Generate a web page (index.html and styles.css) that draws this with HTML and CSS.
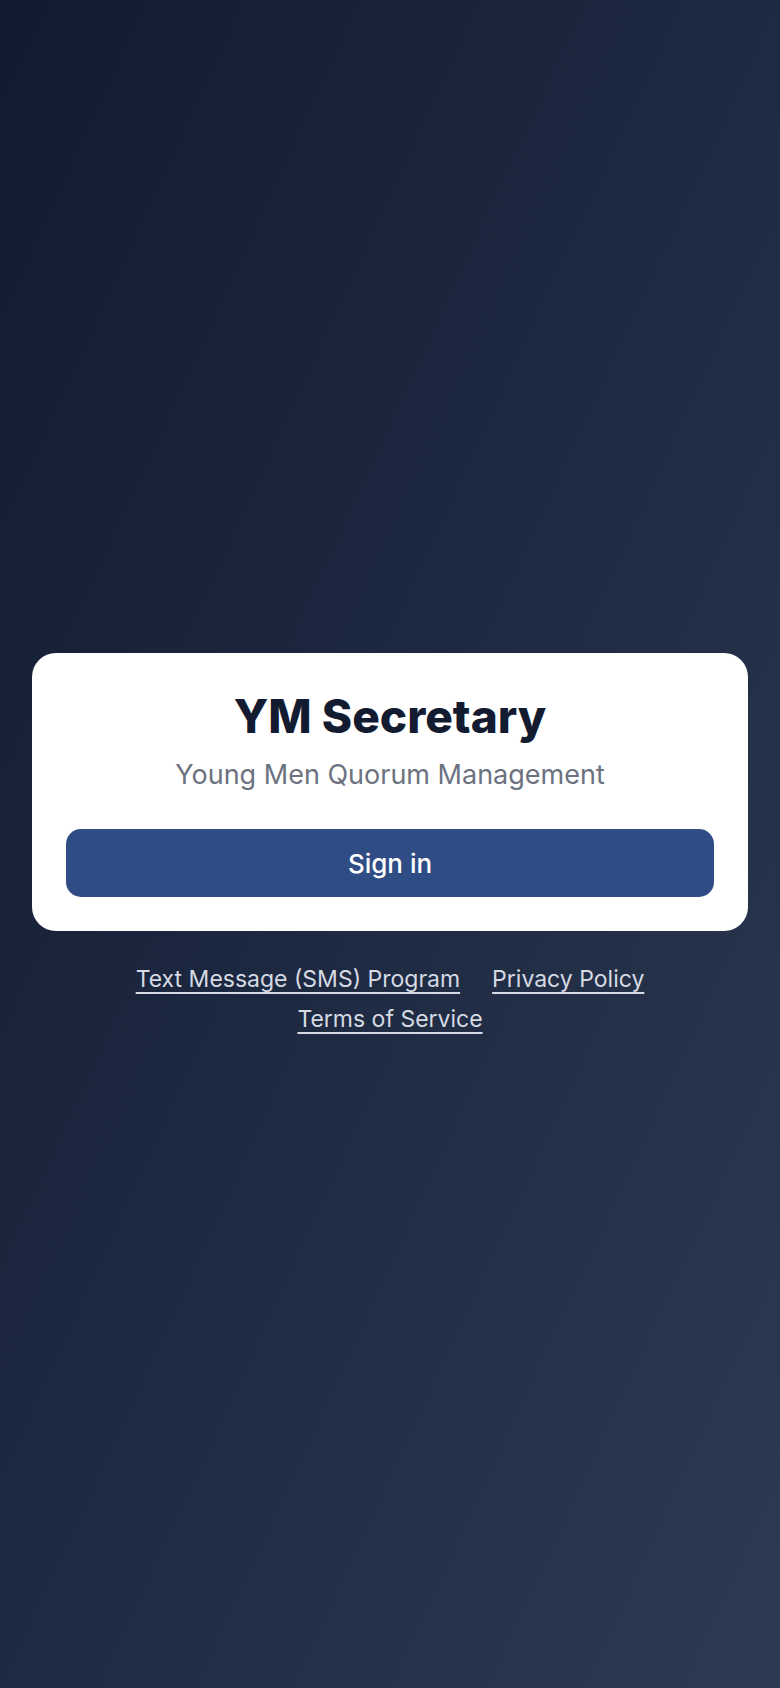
FILE: index.html
```html
<!DOCTYPE html>
<html lang="en">
<head>
    <meta charset="UTF-8">
    <meta name="viewport" content="width=device-width, initial-scale=1.0">
    <title>YM Secretary</title>
    <link rel="stylesheet" href="styles.css">
</head>
<body>
    <main class="login">
        <div class="login-card">
            <h1>YM Secretary</h1>
            <p class="tagline">Young Men Quorum Management</p>
            <button class="signin-btn" type="button">Sign in</button>
        </div>
        <nav class="legal-links">
            <a href="#">Text Message (SMS) Program</a>
            <a href="#">Privacy Policy</a>
            <a href="#">Terms of Service</a>
        </nav>
    </main>
</body>
</html>
```

FILE: styles.css
```css
* {
    box-sizing: border-box;
}

body {
    font-family: Inter, "Noto Sans", Arial, sans-serif;
    margin: 0;
    padding: 0;
    min-height: 100vh;
    background: linear-gradient(to bottom right, #111a30 0%, #1e2a42 50%, #2c3a52 100%);
    display: flex;
    align-items: center;
    justify-content: center;
}

.login {
    width: 100%;
    padding: 0 32px;
    display: flex;
    flex-direction: column;
    align-items: center;
}

.login-card {
    width: 100%;
    background: #fff;
    border-radius: 24px;
    padding: 36px 34px 34px;
    text-align: center;
}

.login-card h1 {
    margin: 0;
    font-size: 46px;
    line-height: 54px;
    font-weight: 800;
    color: #131b30;
}

.tagline {
    margin: 14px 0 0;
    font-size: 27px;
    line-height: 36px;
    color: #6b7280;
}

.signin-btn {
    display: block;
    width: 100%;
    height: 68px;
    margin-top: 36px;
    border: none;
    border-radius: 15px;
    background: #2f4d84;
    color: #fff;
    font-family: inherit;
    font-size: 26px;
    font-weight: 500;
    cursor: pointer;
}

.legal-links {
    margin-top: 32px;
    display: flex;
    flex-wrap: wrap;
    justify-content: center;
    column-gap: 32px;
    row-gap: 8px;
    max-width: 560px;
}

.legal-links a {
    color: #d5dae3;
    font-size: 23px;
    line-height: 32px;
    text-decoration: underline;
    text-underline-offset: 5px;
}
```
